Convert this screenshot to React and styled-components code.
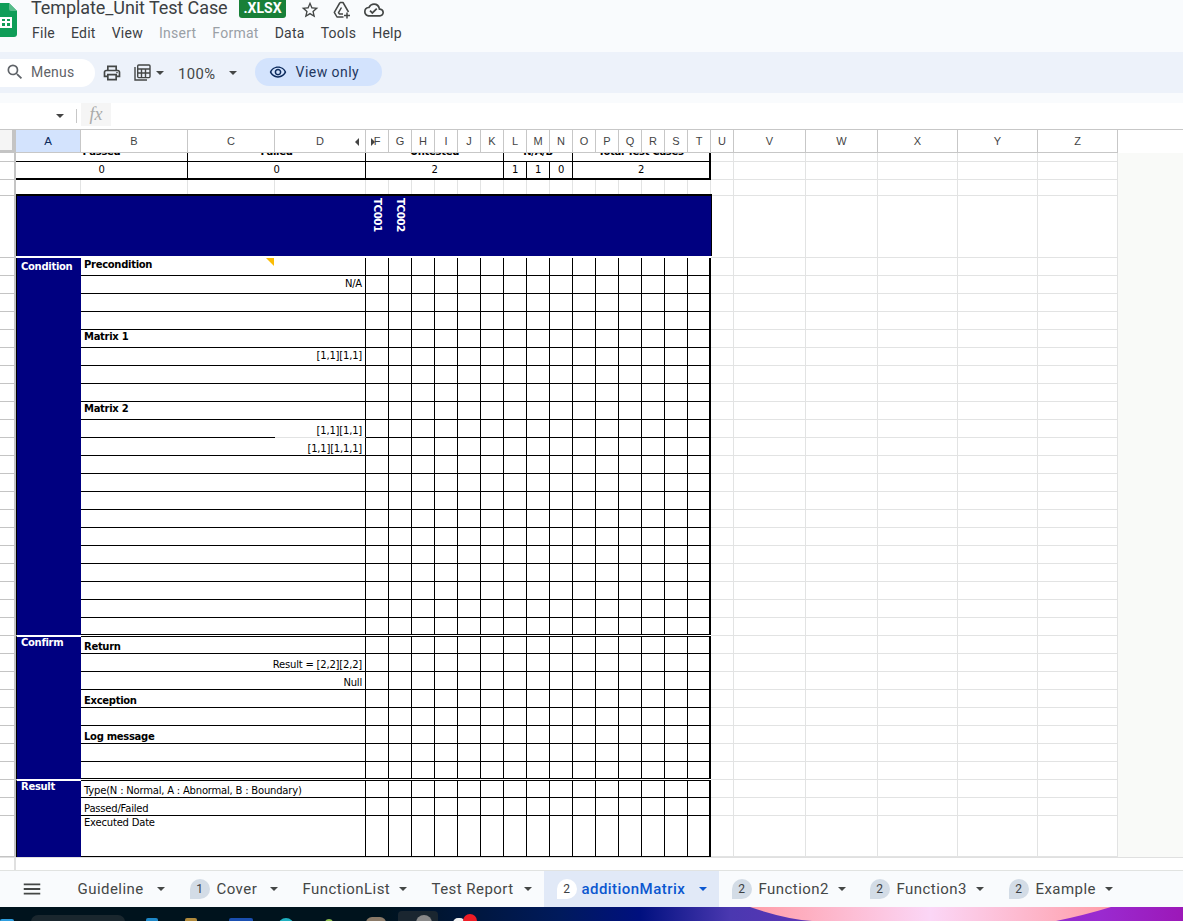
import React from 'react';
import styled, { createGlobalStyle, css } from 'styled-components';
import { MdOutlineStarBorder, MdOutlineCloudDone, MdSearch, MdOutlinePrint, MdOutlineRemoveRedEye, MdMenu } from 'react-icons/md';

const Global = createGlobalStyle`
  html, body { margin: 0; padding: 0; height: 100%; overflow: hidden; background: #f9fbfd; }
  * { box-sizing: border-box; }
`;

const columns = '16px 65px 107px 87px 91px repeat(16, 23px) 72px 72px 80px 80px 80px';
const light = '#e2e3e3';
const cellFont = '"DejaVu Sans", Verdana, sans-serif';

const Page = styled.div`
  width: 1183px; height: 921px; overflow: hidden;
  display: flex; flex-direction: column;
  font-family: Roboto, "Liberation Sans", sans-serif;
  background: #f9fbfd;
`;

/* ---------- header ---------- */
const Header = styled.header`
  height: 52px; flex: none; display: flex; align-items: flex-start;
`;
const LogoWrap = styled.div`
  width: 31px; flex: none; padding-top: 3px;
`;
const HeaderText = styled.div`
  display: flex; flex-direction: column;
`;
const TitleRow = styled.div`
  height: 20px; display: flex; align-items: flex-start; color: #1f1f1f;
`;
const Title = styled.div`
  font-size: 18px; line-height: 18px; margin-top: -1px; width: 208px; letter-spacing: -.08px; color: #3c4043; white-space: nowrap;
`;
const FormatBadge = styled.div`
  width: 47px; height: 18px; background: #188038; color: #fff;
  font-size: 14px; font-weight: 700; line-height: 17px; text-align: center; border-radius: 0 0 3px 3px;
  margin-right: 8px;
`;
const TitleIcon = styled.span`
  width: 32px; height: 19px; display: flex; align-items: center; justify-content: center; color: #444746; font-size: 20px;
`;
const MenuRow = styled.nav`
  display: flex; margin-top: 3px; height: 20px; align-items: center; margin-left: 1px;
`;
const MenuItem = styled.span`
  font-size: 14px; letter-spacing: .25px; margin-right: ${p => p.$gap}px;
  color: ${p => (p.$off ? '#9aa0a6' : '#3c4043')};
`;

/* ---------- toolbar ---------- */
const Toolbar = styled.div`
  height: 41px; flex: none; background: #edf2fa;
  display: flex; align-items: center; color: #444746;
`;
const SearchPill = styled.div`
  width: 95px; height: 28px; background: #fff; border-radius: 0 14px 14px 0; display: flex; align-items: center; gap: 6px; padding: 0 0 1px 5px; margin-right: 7px;
  font-size: 14px; color: #5f6368; letter-spacing: .2px;
`;
const ToolIcon = styled.span`
  display: flex; align-items: center; font-size: 20px; margin-right: ${p => p.$gap || 0}px;
`;
const Caret = styled.i`
  display: inline-block; flex: none; width: 0; height: 0;
  border-left: ${p => p.$s || 4}px solid transparent;
  border-right: ${p => p.$s || 4}px solid transparent;
  border-top: ${p => p.$s || 4}px solid ${p => p.$c || '#444746'};
`;
const Zoom = styled.span`
  font-size: 14.8px; letter-spacing: .45px; color: #444746; margin: 2px 13px 0 14px;
`;
const ViewOnly = styled.div`
  margin-left: 18px; width: 127px; height: 28px; border-radius: 14px; background: #d3e3fd; color: #1f3760;
  display: flex; align-items: center; gap: 9px; padding-left: 14px; font-size: 14px; letter-spacing: .45px; margin-top: -2px;
`;

/* ---------- formula bar ---------- */
const FormulaGap = styled.div`
  height: 10px; flex: none;
`;
const FormulaBar = styled.div`
  height: 27px; flex: none; background: #fff; display: flex; align-items: center;
  border-bottom: 1px solid #c7c7c7;
`;
const NameBox = styled.div`
  width: 76px; height: 100%; display: flex; align-items: center; justify-content: flex-end; padding-right: 12px;
`;
const Divider = styled.span`
  width: 1px; height: 14px; background: #c7c7c7; margin-right: 4px;
`;
const FxBox = styled.div`
  width: 30px; height: 23px; margin-top: -3px; background: #f5f5f5; color: #aaa;
  font: italic 18px "Liberation Serif", serif; display: flex; align-items: center; justify-content: center;
`;

/* ---------- sheet ---------- */
const SheetArea = styled.div`
  height: 740px; flex: none; background: #fff; overflow: hidden; display: flex; flex-direction: column;
`;
const ColumnHeader = styled.div`
  display: grid; grid-template-columns: ${columns}; height: 23px; flex: none; width: 1118px;
`;
const Corner = styled.div`
  background: #f5f5f5; border-right: 4px solid #c4c4c4; border-bottom: 3px solid #c4c4c4;
`;
const ColHead = styled.div`
  position: relative; display: flex; align-items: center; justify-content: center;
  font: 11px "Liberation Sans", sans-serif; border-right: 1px solid #c7c7c7; border-bottom: 1px solid #c7c7c7;
  color: ${p => (p.$sel ? '#0b2a5c' : '#444')};
  background: ${p => (p.$sel ? '#d3e3fd' : '#fff')};
  ${p => p.$sel && css`font-size: 11.5px;`}
`;
const HideArrow = styled.i`
  position: absolute; top: 8px; width: 0; height: 0;
  border-top: 4px solid transparent; border-bottom: 4px solid transparent;
  ${p => (p.$dir === 'left'
    ? css`right: 6px; border-right: 4px solid #444;`
    : css`left: 5px; border-left: 4px solid #444;`)}
`;
const SheetBody = styled.div`
  display: flex; height: 704px; flex: none; background: #f9faf8;
`;
const Sheet = styled.div`
  display: grid; width: 1118px; flex: none; height: 704px; overflow: hidden; background: #fff;
  grid-template-columns: ${columns};
  grid-template-rows: 9px 18px 16px 62px repeat(29, 18px) 18px 18px 41px;
  font-family: ${cellFont}; font-size: 10px; letter-spacing: -.2px; color: #000;
`;
const Gutter = styled.div`
  grid-column: 1; background: #fff; border-right: 2px solid #c4c4c4; border-bottom: 1px solid #c4c4c4;
`;
const Light = styled.div`
  border-right: 1px solid ${light}; border-bottom: 1px solid ${light};
`;
const Clipped = styled.div`
  grid-column: span ${p => p.$span};
  overflow: hidden; display: flex; align-items: flex-end; justify-content: center;
  border-right: ${p => (p.$last ? 2 : 1)}px solid #000; border-bottom: 1px solid #000;
  font-weight: 700; letter-spacing: -.3px; line-height: 12px; white-space: nowrap; padding-bottom: 3px;
`;
const Value = styled.div`
  grid-column: span ${p => p.$span || 1};
  display: flex; align-items: center; justify-content: center; padding-bottom: 1px;
  border-bottom: 2px solid #000;
  border-right: ${p => (p.$last ? 2 : 1)}px solid #000;
`;
const NavyLeft = styled.div`
  grid-column: span 4; background: #000080; border-top: 2px solid #000; border-left: 1px solid #000; margin: -2px 0 2px;
`;
const NavyCol = styled.div`
  background: #000080; border-top: 2px solid #000; margin: -2px 0 2px;
  ${p => p.$last && css`border-right: 1px solid #000; margin-right: -1px;`}
`;
const VerticalLabel = styled.div`
  writing-mode: vertical-rl; color: #fff; font-weight: 700; font-size: 10.5px; letter-spacing: -.6px; line-height: 23px; padding-top: 2px; white-space: nowrap;
`;
const Section = styled.div`
  grid-row: span ${p => p.$rows}; background: #000080; color: #fff; font-weight: 700; letter-spacing: -.3px;
  line-height: 12px; padding: 3px 0 0 4px; border-left: 1px solid #000;
  ${p => p.$rule && css`border-top: 2px solid #fff; margin-top: -1px; padding-top: 0; position: relative;`}
`;
const doubleRule = css`
  position: relative; border-top: 1px solid #000; box-shadow: 0 -1px 0 #fff, 0 -2px 0 #000;
`;
const Label = styled.div`
  grid-column: span 3; position: relative; display: flex; white-space: nowrap; padding: 0 3px;
  border-right: 1px solid #000;
  border-bottom: 1px solid ${p => (p.$partial ? 'transparent' : '#000')};
  justify-content: ${p => (p.$right ? 'flex-end' : 'flex-start')};
  align-items: ${p => (p.$top ? 'flex-start' : 'flex-end')};
  padding-bottom: ${p => (p.$mid ? 3 : 0)}px;
  font-weight: ${p => (p.$bold ? 700 : 400)};
  letter-spacing: ${p => (p.$bold ? '-.3px' : '-.2px')};
  line-height: 13px;
  ${p => p.$double && doubleRule}
  ${p => p.$partial && css`
    background: linear-gradient(90deg, #000 194px, ${light} 194px) left bottom / 100% 1px no-repeat;
    background-origin: border-box; background-clip: border-box;
  `}
`;
const Note = styled.i`
  position: absolute; top: 0; left: 185px; width: 0; height: 0;
  border-top: 8px solid #fbbc04; border-left: 8px solid transparent;
`;
const Test = styled.div`
  border-bottom: 1px solid #000; border-right: ${p => (p.$last ? 2 : 1)}px solid #000;
  ${p => p.$double && doubleRule}
`;
const SheetFoot = styled.div`
  flex: 1; display: flex; border-top: 1px solid #e0e0e0;
`;
const FootGutter = styled.div`
  width: 16px; border-right: 2px solid #e0e0e0;
`;

/* ---------- tabs ---------- */
const TabBar = styled.div`
  height: 37px; flex: none; display: flex; align-items: stretch; background: #f9fbfd; border-top: 1px solid #e1e3e1;
`;
const AllSheets = styled.div`
  width: 65px; flex: none; display: flex; align-items: center; padding-left: 21px; font-size: 22px; color: #444746;
`;
const Tab = styled.div`
  width: ${p => p.$w}px; flex: none;
  display: flex; align-items: center; padding: 0 12px 0 12.5px; gap: 9px; font-size: 15px; letter-spacing: .45px; font-weight: ${p => (p.$active ? 500 : 400)};
  color: ${p => (p.$active ? '#0b57d0' : '#444746')};
  background: ${p => (p.$active ? '#e1e9f7' : 'transparent')};
  white-space: nowrap;
  ${Caret} { margin-left: auto; }
`;
const Badge = styled.span`
  width: 20px; height: 20px; border-radius: 10px 10px 10px 0; margin-right: ${p => (p.$active ? -4 : -2)}px;
  background: ${p => (p.$active ? '#fff' : '#d3dce6')}; color: #3c4043; font-size: 12px; font-weight: 400; letter-spacing: 0;
  display: flex; align-items: center; justify-content: center; flex: none;
`;

/* ---------- desktop strip ---------- */
const Taskbar = styled.div`
  flex: 1; position: relative; overflow: hidden;
  background: linear-gradient(90deg, #00131d 0, #00131d 380px, #001a5c 560px, #00107f 640px, #4a38b0 730px, #9a2ad0 1100px, #9c18b8 1183px);
`;
const Wallpaper = styled.svg`
  position: absolute; inset: 0; width: 100%; height: 100%;
`;
const TaskIcon = styled.span`
  position: absolute; top: ${p => p.$y}px; left: ${p => p.$x}px; width: ${p => p.$w}px; height: 14px;
  background: ${p => p.$c}; border-radius: ${p => p.$r || 2}px ${p => p.$r || 2}px 0 0;
`;
const ALPHA = ['A','B','C','D','F','G','H','I','J','K','L','M','N','O','P','Q','R','S','T','U','V','W','X','Y','Z'];

const sheetsLogo = (
  <svg width="17" height="34" viewBox="0 0 17 34" aria-hidden="true">
    <path d="M-6 0H9l8 8v23a3 3 0 0 1-3 3H-6z" fill="#0f9d58" />
    <path d="M9 0l8 8H11a2 2 0 0 1-2-2z" fill="#57bb8a" />
    <path d="M0 14h12v11H0zm2 2v2h3v-2H2zm5 0v2h3v-2H7zm-5 4v3h3v-3H2zm5 0v3h3v-3H7z" fill="#fff" fillRule="evenodd" />
  </svg>
);

const driveIcon = (
  <svg width="20" height="20" viewBox="0 0 20 20" aria-hidden="true" fill="none" stroke="#444746" strokeWidth="1.5" strokeLinejoin="round">
    <path d="M8 2.5h3l5.5 9.5M8 2.5L2.3 12.3 5 17h6.5" />
    <path d="M9.5 7.5l-3 5.2 1 1.3h3.5" />
    <path d="M15 12.5v6M12 15.5h6" />
  </svg>
);

const calcIcon = (
  <svg width="17" height="17" viewBox="0 0 17 17" aria-hidden="true" fill="none" stroke="#444746" strokeWidth="1.4">
    <path d="M1 3v13h12" />
    <rect x="3.7" y="1" width="12.3" height="12.6" rx="1" />
    <path d="M4 5h12M7.5 5v8.5M11.5 5v8.5M4 9h12" />
  </svg>
);

const body = [
  { t: 'Precondition', bold: 1, top: 1, note: 1 },
  { t: 'N/A', right: 1, mid: 1 },
  {}, {},
  { t: 'Matrix 1', bold: 1, top: 1 },
  { t: '[1,1][1,1]', right: 1, mid: 1 },
  {}, {},
  { t: 'Matrix 2', bold: 1, top: 1 },
  { t: '[1,1][1,1]', right: 1, partial: 1 },
  { t: '[1,1][1,1,1]', right: 1 },
  ...Array(10).fill({}),
  { t: 'Return', bold: 1, double: 1 },
  { t: 'Result = [2,2][2,2]', right: 1 },
  { t: 'Null', right: 1 },
  { t: 'Exception', bold: 1 },
  {},
  { t: 'Log message', bold: 1 },
  {}, {},
  { t: 'Type(N : Normal, A : Abnormal, B : Boundary)', double: 1 },
  { t: 'Passed/Failed' },
  { t: 'Executed Date', top: 1 },
];
const sections = { 0: ['Condition', 21, false], 21: ['Confirm', 8, true], 29: ['Result', 3, true] };

const testCells = Array.from({ length: 15 }, (_, i) => i);
const lightTail = Array.from({ length: 6 }, (_, i) => i);

const tabs = [
  { name: 'Guideline', w: 112 },
  { name: 'Cover', n: 1, w: 113 },
  { name: 'FunctionList', w: 129 },
  { name: 'Test Report', w: 125 },
  { name: 'additionMatrix', n: 2, active: true, w: 175 },
  { name: 'Function2', n: 2, w: 138 },
  { name: 'Function3', n: 2, w: 139 },
  { name: 'Example', n: 2, w: 128 },
];

const Tail = ({ prefix }) => lightTail.map(i => <Light key={prefix + i} />);

export default function App() {
  return (
    <Page>
      <Global />
      <Header>
        <LogoWrap>{sheetsLogo}</LogoWrap>
        <HeaderText>
          <TitleRow>
            <Title>Template_Unit Test Case</Title>
            <FormatBadge>.XLSX</FormatBadge>
            <TitleIcon><MdOutlineStarBorder /></TitleIcon>
            <TitleIcon>{driveIcon}</TitleIcon>
            <TitleIcon><MdOutlineCloudDone /></TitleIcon>
          </TitleRow>
          <MenuRow>
            <MenuItem $gap={16}>File</MenuItem>
            <MenuItem $gap={16}>Edit</MenuItem>
            <MenuItem $gap={16}>View</MenuItem>
            <MenuItem $gap={16} $off>Insert</MenuItem>
            <MenuItem $gap={16} $off>Format</MenuItem>
            <MenuItem $gap={16}>Data</MenuItem>
            <MenuItem $gap={16}>Tools</MenuItem>
            <MenuItem $gap={0}>Help</MenuItem>
          </MenuRow>
        </HeaderText>
      </Header>

      <Toolbar>
        <SearchPill><MdSearch size={20} />Menus</SearchPill>
        <ToolIcon $gap={12}><MdOutlinePrint /></ToolIcon>
        <ToolIcon $gap={5}>{calcIcon}</ToolIcon>
        <Caret />
        <Zoom>100%</Zoom>
        <Caret />
        <ViewOnly><MdOutlineRemoveRedEye size={18} color="#0b2a5c" />View only</ViewOnly>
      </Toolbar>

      <FormulaGap />
      <FormulaBar>
        <NameBox><Caret $c="#444" /></NameBox>
        <Divider />
        <FxBox>fx</FxBox>
      </FormulaBar>

      <SheetArea>
        <ColumnHeader>
          <Corner />
          {ALPHA.map(c => (
            <ColHead key={c} $sel={c === 'A'}>
              {c}
              {c === 'D' && <HideArrow $dir="left" />}
              {c === 'F' && <HideArrow $dir="right" />}
            </ColHead>
          ))}
        </ColumnHeader>

        <SheetBody>
          <Sheet>
            <Gutter />
            <Clipped $span={2}>Passed</Clipped>
            <Clipped $span={2}>Failed</Clipped>
            <Clipped $span={6}>Untested</Clipped>
            <Clipped $span={3}>N/A/B</Clipped>
            <Clipped $span={6} $last>Total Test Cases</Clipped>
            <Tail prefix="a" />

            <Gutter />
            <Value $span={2}>0</Value>
            <Value $span={2}>0</Value>
            <Value $span={6}>2</Value>
            <Value>1</Value>
            <Value>1</Value>
            <Value>0</Value>
            <Value $span={6} $last>2</Value>
            <Tail prefix="b" />

            <Gutter />
            <Light />
            <Light />
            <Light />
            <Light />
            {testCells.map(i => <Light key={'c' + i} />)}
            <Tail prefix="c" />

            <Gutter />
            <NavyLeft />
            {testCells.map(i => (
              <NavyCol key={'d' + i} $last={i === 14}>
                {i === 0 && <VerticalLabel>TC001</VerticalLabel>}
                {i === 1 && <VerticalLabel>TC002</VerticalLabel>}
              </NavyCol>
            ))}
            <Tail prefix="d" />

            {body.map((r, idx) => (
              <React.Fragment key={idx}>
                <Gutter />
                {sections[idx] && (
                  <Section $rows={sections[idx][1]} $rule={sections[idx][2]}>{sections[idx][0]}</Section>
                )}
                <Label $bold={r.bold} $right={r.right} $top={r.top} $mid={r.mid} $double={r.double} $partial={r.partial}>
                  {r.t}
                  {r.note && <Note />}
                </Label>
                {testCells.map(i => <Test key={i} $last={i === 14} $double={r.double} />)}
                <Tail prefix={'r' + idx} />
              </React.Fragment>
            ))}
          </Sheet>
        </SheetBody>
        <SheetFoot><FootGutter /></SheetFoot>
      </SheetArea>

      <TabBar>
        <AllSheets><MdMenu /></AllSheets>
        {tabs.map(t => (
          <Tab key={t.name} $active={t.active} $w={t.w}>
            {t.n && <Badge $active={t.active}>{t.n}</Badge>}
            <span>{t.name}</span>
            <Caret $c={t.active ? '#0b57d0' : '#444746'} />
          </Tab>
        ))}
      </TabBar>

      <Taskbar>
        <Wallpaper viewBox="0 0 1183 14" preserveAspectRatio="none" aria-hidden="true">
          <defs>
            <linearGradient id="pink" x1="0" x2="1" y1="0" y2="0">
              <stop offset="0" stopColor="#ff9da8" />
              <stop offset=".5" stopColor="#fbd6f6" />
              <stop offset="1" stopColor="#ff9da8" />
            </linearGradient>
          </defs>
          <path d="M750 0Q785 12 812 14H1056Q1085 8 1111 0Z" fill="url(#pink)" />
        </Wallpaper>
        <TaskIcon $x={0} $y={12} $w={14} $c="#2f9fe0" />
        <TaskIcon $x={31} $y={8} $w={94} $c="#1a272e" $r={7} />
        <TaskIcon $x={146} $y={11} $w={12} $c="#1e88c8" />
        <TaskIcon $x={185} $y={11} $w={12} $c="#b08a3c" />
        <TaskIcon $x={229} $y={11} $w={24} $c="#1a4fb0" />
        <TaskIcon $x={278} $y={11} $w={16} $c="#1fb0c0" $r={8} />
        <TaskIcon $x={325} $y={12} $w={8} $c="#8fbf50" $r={4} />
        <TaskIcon $x={366} $y={10} $w={20} $c="#8a7a68" $r={6} />
        <TaskIcon $x={398} $y={4} $w={40} $c="#1a2630" $r={4} />
        <TaskIcon $x={416} $y={8} $w={16} $c="#888" $r={8} />
        <TaskIcon $x={453} $y={11} $w={12} $c="#f0f0f0" $r={5} />
        <TaskIcon $x={463} $y={7} $w={14} $c="#ee1c25" $r={7} />
      </Taskbar>
    </Page>
  );
}
